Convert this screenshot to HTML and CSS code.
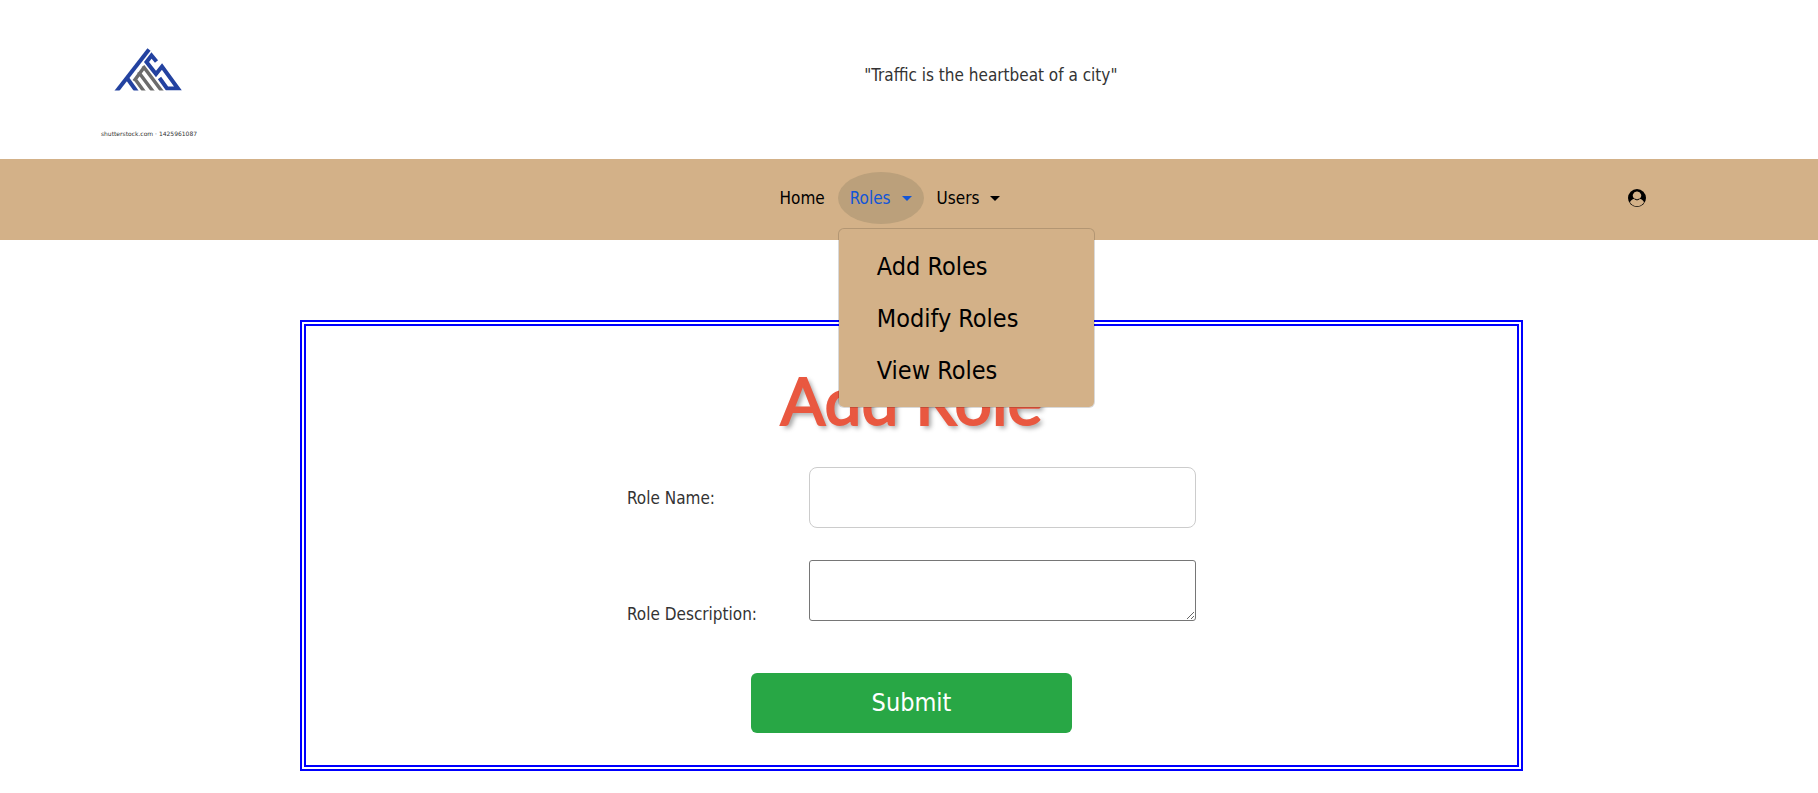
FILE: index.html
```html
<!DOCTYPE html>
<html lang="en">
<head>
<meta charset="utf-8">
<title>Add Role</title>
<link rel="stylesheet" href="styles.css">
</head>
<body>
<header class="header">
  <svg class="logo" viewBox="0 0 98 108" role="img" aria-label="TMS">
    <defs><clipPath id="base"><path d="M0 0H98V60.500H0Z"/></clipPath></defs>
    <g clip-path="url(#base)" fill="none" stroke-width="4">
      <g stroke="#2342a0">
        <path d="M16 62 49 19.500"/>
        <path d="M27 48 37 62"/>
        <path d="M56.500 31.500 51.500 25.500 46.500 32 56 44 62 36.500 78 58.500H67L59.500 48"/>
      </g>
      <g stroke="#6c6c6c" stroke-width="3.500">
        <path d="M35 49 44.500 62M38.500 42 53.500 62M43 36 62.500 62M34 51 44 37.500"/>
      </g>
    </g>
    <text class="logo-caption" x="49" y="106" text-anchor="middle">shutterstock.com · 1425961087</text>
  </svg>
  <p class="tagline">"Traffic is the heartbeat of a city"</p>
</header>
<nav class="nav">
  <ul class="nav-list">
    <li><a class="nav-link" href="#">Home</a></li>
    <li class="nav-item">
      <a class="nav-link active" href="#" aria-expanded="true">Roles<span class="caret"></span></a>
      <div class="menu">
        <a class="menu-link" href="#">Add Roles</a>
        <a class="menu-link" href="#">Modify Roles</a>
        <a class="menu-link" href="#">View Roles</a>
      </div>
    </li>
    <li><a class="nav-link" href="#" aria-expanded="false">Users<span class="caret"></span></a></li>
  </ul>
  <a class="user" href="#" aria-label="Account">
    <svg class="user-icon" viewBox="0 0 18 18">
      <circle cx="9" cy="9" r="9"/>
      <path class="user-figure" d="M9 2.600a4 4 0 0 0-2.600 7.200C4 10.200 2.300 12 2 13.300a8.100 8.100 0 0 0 14 0c-.3-1.300-2-3.100-4.400-3.500A4 4 0 0 0 9 2.600Z"/>
      <path class="user-neck" d="M6.400 9.900Q9 12 11.600 9.900"/>
    </svg>
  </a>
</nav>
<main class="main">
  <form class="card">
    <h1 class="title">Add Role</h1>
    <div class="fields">
      <label class="label" for="name">Role Name:</label>
      <input class="field" id="name" type="text">
      <label class="label label-low" for="description">Role Description:</label>
      <textarea class="field area" id="description"></textarea>
    </div>
    <button class="submit" type="submit">Submit</button>
  </form>
</main>
</body>
</html>
```
FILE: styles.css
```css
* { box-sizing: border-box; }
body {
  margin: 0;
  background: #fff;
  color: #333;
  font: 17px/24px Tahoma, "DejaVu Sans Condensed", "Noto Sans", sans-serif;
}
a { color: #000; text-decoration: none; }
.header {
  display: grid;
  grid-template-columns: 164fr 762fr 74fr;
  justify-items: center;
  padding: 30px 0 21px;
}
.logo { width: 98px; height: 108px; }
.logo-caption { font: 6px "DejaVu Sans", sans-serif; fill: #333; }
.tagline { margin: 33px 0 0; }
.nav {
  display: flex;
  align-items: center;
  padding: 13px 172px 16px 152px;
  background: #d3b188;
}
.nav-list {
  display: flex;
  flex: 1;
  justify-content: center;
  gap: 1px;
  margin: 0;
  padding: 0;
  list-style: none;
}
.nav-item { position: relative; }
.nav-link {
  display: flex;
  align-items: center;
  gap: 11px;
  padding: 14px 12px;
  border-radius: 50%;
}
.nav-link.active { background: #bba07b; color: #1155d8; }
.caret { border: 5px solid transparent; border-top-color: currentColor; border-bottom: 0; }
.menu {
  position: absolute;
  top: 56px;
  left: 0;
  width: 257px;
  padding: 12px 0 10px;
  border: 1px solid rgba(0, 0, 0, .15);
  border-radius: 6px;
  background: #d3b188;
  background-clip: padding-box;
  z-index: 1;
}
.menu-link { display: block; padding: 8px 38px; font-size: 25px; line-height: 36px; }
.user-icon { display: block; width: 18px; height: 18px; }
.user-figure { fill: #d3b188; }
.user-neck { fill: none; stroke: #000; }
.main { padding: 80px 295px 22px 300px; }
.card {
  display: flex;
  flex-direction: column;
  align-items: center;
  padding: 32px;
  border: 6px double #00f;
}
.title {
  margin: 0;
  color: #e95840;
  font: 66px/84px "Comic Sans MS", Lato, sans-serif;
  -webkit-text-stroke: 2px #e95840;
  text-shadow: 3px 3px 5px rgba(0, 0, 0, .4);
}
.fields {
  display: grid;
  grid-template-columns: 182px 387px;
  row-gap: 32px;
  align-items: center;
  margin: 25px 0 47px;
}
.label-low { align-self: end; }
.field {
  width: 100%;
  height: 61px;
  padding: 8px;
  border: 1px solid #ccc;
  border-radius: 8px;
  background: #fff;
  font: inherit;
}
.area {
  display: block;
  margin-bottom: 5px;
  border-color: #767676;
  border-radius: 3px;
  resize: both;
}
.submit {
  width: 321px;
  height: 60px;
  border: 0;
  border-radius: 6px;
  background: #28a745;
  color: #fff;
  font: inherit;
  font-size: 25px;
}
```
